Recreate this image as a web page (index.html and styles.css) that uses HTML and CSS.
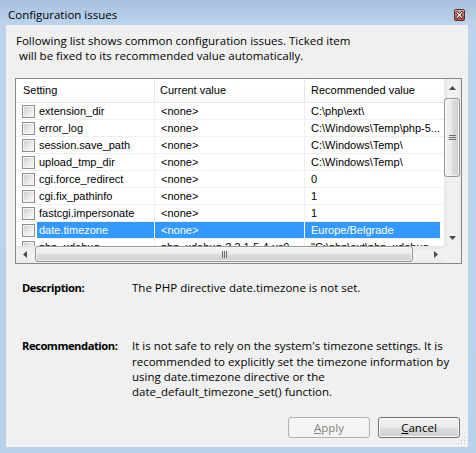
FILE: index.html
```html
<!DOCTYPE html>
<html>
<head>
<meta charset="utf-8">
<title>Configuration issues</title>
<link rel="stylesheet" href="styles.css">
</head>
<body>
<div class="window">
  <div class="titlebar">
    <span class="title">Configuration issues</span>
    <span class="close">
      <svg width="11" height="12" viewBox="0 0 11 12">
        <defs>
          <linearGradient id="cg" x1="0" y1="0" x2="0" y2="1">
            <stop offset="0" stop-color="#e9b2a8"/>
            <stop offset="0.5" stop-color="#d7766a"/>
            <stop offset="1" stop-color="#c24a3c"/>
          </linearGradient>
        </defs>
        <rect x="0.5" y="0.5" width="10" height="11" rx="1.5" fill="url(#cg)" stroke="#5e2a2a"/>
        <path d="M3.2 3.7 L7.8 8.3 M7.8 3.7 L3.2 8.3" stroke="#4a1d1d" stroke-width="2.8" stroke-linecap="square"/>
        <path d="M3.2 3.7 L7.8 8.3 M7.8 3.7 L3.2 8.3" stroke="#ffffff" stroke-width="1.2" stroke-linecap="square"/>
      </svg>
    </span>
  </div>
  <div class="client">
    <p class="intro">Following list shows common configuration issues. Ticked item<br>&nbsp;will be fixed to its recommended value automatically.</p>

    <div class="listview">
      <div class="lv-content">
        <div class="lv-header">
          <div class="hcell c1">Setting</div>
          <div class="hcell c2">Current value</div>
          <div class="hcell c3">Recommended value</div>
        </div>
        <div class="row">
          <div class="cell c1"><span class="check"></span><span class="name">extension_dir</span></div>
          <div class="cell c2">&lt;none&gt;</div>
          <div class="cell c3">C:\php\ext\</div>
        </div>
        <div class="row">
          <div class="cell c1"><span class="check"></span><span class="name">error_log</span></div>
          <div class="cell c2">&lt;none&gt;</div>
          <div class="cell c3">C:\Windows\Temp\php-5...</div>
        </div>
        <div class="row">
          <div class="cell c1"><span class="check"></span><span class="name">session.save_path</span></div>
          <div class="cell c2">&lt;none&gt;</div>
          <div class="cell c3">C:\Windows\Temp\</div>
        </div>
        <div class="row">
          <div class="cell c1"><span class="check"></span><span class="name">upload_tmp_dir</span></div>
          <div class="cell c2">&lt;none&gt;</div>
          <div class="cell c3">C:\Windows\Temp\</div>
        </div>
        <div class="row">
          <div class="cell c1"><span class="check"></span><span class="name">cgi.force_redirect</span></div>
          <div class="cell c2">&lt;none&gt;</div>
          <div class="cell c3">0</div>
        </div>
        <div class="row">
          <div class="cell c1"><span class="check"></span><span class="name">cgi.fix_pathinfo</span></div>
          <div class="cell c2">&lt;none&gt;</div>
          <div class="cell c3">1</div>
        </div>
        <div class="row">
          <div class="cell c1"><span class="check"></span><span class="name">fastcgi.impersonate</span></div>
          <div class="cell c2">&lt;none&gt;</div>
          <div class="cell c3">1</div>
        </div>
        <div class="row selected">
          <div class="cell c1"><span class="check"></span><span class="name">date.timezone</span></div>
          <div class="cell c2">&lt;none&gt;</div>
          <div class="cell c3">Europe/Belgrade</div>
        </div>
        <div class="row">
          <div class="cell c1"><span class="check"></span><span class="name">php_xdebug</span></div>
          <div class="cell c2">php_xdebug-2.2.1-5.4-vc9</div>
          <div class="cell c3">"C:\php\ext\php_xdebug-2.2.1-5.4-vc9.dll"</div>
        </div>
      </div>

      <div class="vscroll">
        <div class="sbtn">
          <svg width="7" height="4" viewBox="0 0 7 4"><polygon points="0,4 7,4 3.5,0" fill="#4a4a4a"/></svg>
        </div>
        <div class="vthumb">
          <svg width="7" height="5" viewBox="0 0 7 5"><path d="M0 0.5h7M0 2.5h7M0 4.5h7" stroke="#6b6b6b" stroke-width="1"/></svg>
        </div>
        <div class="sfill"></div>
        <div class="sbtn">
          <svg width="7" height="4" viewBox="0 0 7 4"><polygon points="0,0 7,0 3.5,4" fill="#4a4a4a"/></svg>
        </div>
      </div>

      <div class="hscroll">
        <div class="sbtn">
          <svg width="4" height="7" viewBox="0 0 4 7"><polygon points="4,0 4,7 0,3.5" fill="#4a4a4a"/></svg>
        </div>
        <div class="hthumb">
          <svg width="5" height="7" viewBox="0 0 5 7"><path d="M0.5 0v7M2.5 0v7M4.5 0v7" stroke="#6b6b6b" stroke-width="1"/></svg>
        </div>
        <div class="sfill"></div>
        <div class="sbtn">
          <svg width="4" height="7" viewBox="0 0 4 7"><polygon points="0,0 0,7 4,3.5" fill="#4a4a4a"/></svg>
        </div>
      </div>
      <div class="corner"></div>
    </div>

    <div class="details">
      <div class="label">Description:</div>
      <div class="value">The PHP directive date.timezone is not set.</div>
      <div class="label">Recommendation:</div>
      <div class="value">It is not safe to rely on the system's timezone settings. It is<br>recommended to explicitly set the timezone information by<br>using date.timezone directive or the<br>date_default_timezone_set() function.</div>
    </div>

    <div class="buttons">
      <button class="btn disabled"><u>A</u>pply</button>
      <button class="btn"><u>C</u>ancel</button>
    </div>

    <svg class="grip" width="8" height="8" viewBox="0 0 8 8">
      <g fill="#b8b8b8">
        <rect x="6" y="0" width="1" height="1"/>
        <rect x="3" y="3" width="1" height="1"/><rect x="6" y="3" width="1" height="1"/>
        <rect x="0" y="6" width="1" height="1"/><rect x="3" y="6" width="1" height="1"/><rect x="6" y="6" width="1" height="1"/>
      </g>
      <g fill="#ffffff">
        <rect x="7" y="1" width="1" height="1"/>
        <rect x="4" y="4" width="1" height="1"/><rect x="7" y="4" width="1" height="1"/>
        <rect x="1" y="7" width="1" height="1"/><rect x="4" y="7" width="1" height="1"/><rect x="7" y="7" width="1" height="1"/>
      </g>
    </svg>
  </div>
</div>
</body>
</html>
```

FILE: styles.css
```css
html, body {
  margin: 0;
  padding: 0;
}

body {
  width: 476px;
  height: 453px;
  overflow: hidden;
  font-family: "Open Sans", "Noto Sans", sans-serif;
  color: #000;
}

.window {
  width: 476px;
  height: 453px;
  box-sizing: border-box;
  padding: 0 8px 6px 6px;
  display: flex;
  flex-direction: column;
  background: linear-gradient(to bottom, #a7c1df 0px, #bcd3eb 25px, #b9d1ea 100%);
}

.titlebar {
  height: 25px;
  box-sizing: border-box;
  padding: 4px 3px 0 2px;
  display: flex;
  align-items: center;
  justify-content: space-between;
}

.title {
  font-size: 11.5px;
  line-height: 15px;
}

.close {
  display: block;
  width: 11px;
  height: 12px;
}

.close svg {
  display: block;
}

.client {
  flex: 1;
  position: relative;
  background: #f0f0f0;
  display: flex;
  flex-direction: column;
}

.intro {
  margin: 0;
  padding: 8px 0 0 10px;
  font-size: 11.5px;
  line-height: 15px;
  white-space: nowrap;
}

/* list view */
.listview {
  margin: 15px 0 0 9px;
  width: 447px;
  height: 186px;
  box-sizing: border-box;
  border: 1px solid #828790;
  background: #fff;
  display: grid;
  grid-template-columns: 428px 17px;
  grid-template-rows: 167px 17px;
  font-family: "Liberation Sans", Arial, sans-serif;
  font-size: 11px;
}

.lv-content {
  overflow: hidden;
}

.lv-header {
  display: flex;
  height: 24px;
  box-sizing: border-box;
  border-bottom: 1px solid #e5e5e5;
  background: linear-gradient(to bottom, #ffffff 0%, #ffffff 60%, #f7f8fa 100%);
}

.hcell {
  flex: none;
  box-sizing: border-box;
  line-height: 23px;
  border-right: 1px solid #e5e5e5;
  white-space: nowrap;
}

.hcell.c1 { width: 139px; padding-left: 7px; }
.hcell.c2 { width: 150px; padding-left: 5px; }
.hcell.c3 { width: 200px; padding-left: 6px; border-right: none; }

.row {
  display: flex;
  height: 17px;
  box-sizing: border-box;
  border-bottom: 1px solid #f0f0f0;
}

.cell {
  flex: none;
  box-sizing: border-box;
  height: 16px;
  line-height: 16px;
  white-space: nowrap;
  overflow: hidden;
  text-overflow: ellipsis;
  border-right: 1px solid #f0f0f0;
}

.cell.c1 {
  width: 139px;
  display: flex;
  align-items: center;
  padding-left: 6px;
}

.cell.c2 { width: 150px; padding-left: 6px; }
.cell.c3 { width: 135px; padding-left: 6px; border-right: none; }

.check {
  flex: none;
  position: relative;
  width: 13px;
  height: 13px;
  box-sizing: border-box;
  border: 1px solid #8e8f8f;
  background: #f4f4f4;
}

.check::after {
  content: "";
  position: absolute;
  left: 1px;
  top: 1px;
  width: 9px;
  height: 9px;
  background: linear-gradient(135deg, #cfcfcf 0%, #e9e9e9 55%, #f9f9f9 100%);
}

.name {
  flex: 1;
  height: 16px;
  margin-left: 2px;
  padding-left: 2px;
  overflow: hidden;
}

.row.selected .name,
.row.selected .c2,
.row.selected .c3 {
  background: #3399ff;
  color: #fff;
}

.row.selected .cell {
  border-right-color: #ffffff;
}

/* scrollbars */
.vscroll {
  display: flex;
  flex-direction: column;
  background: linear-gradient(to right, #e6e6e6 0%, #f1f1f1 30%, #f1f1f1 70%, #e9e9e9 100%);
}

.hscroll {
  display: flex;
  background: linear-gradient(to bottom, #e6e6e6 0%, #f1f1f1 30%, #f1f1f1 70%, #e9e9e9 100%);
}

.corner {
  background: #f0f0f0;
}

.sbtn {
  flex: none;
  width: 17px;
  height: 17px;
  display: flex;
  align-items: center;
  justify-content: center;
}

.sbtn svg, .vthumb svg, .hthumb svg {
  display: block;
}

.sfill {
  flex: 1;
}

.vthumb {
  flex: none;
  margin: 2px 1px 0 0;
  height: 79px;
  box-sizing: border-box;
  border: 1px solid #979797;
  border-radius: 3px;
  background: linear-gradient(to right, #f3f3f3 0%, #ececec 45%, #dcdcdc 55%, #cfcfcf 100%);
  box-shadow: inset 0 0 0 1px rgba(255, 255, 255, 0.6);
  display: flex;
  align-items: center;
  justify-content: center;
}

.hthumb {
  flex: none;
  margin: 0 0 1px 2px;
  width: 378px;
  box-sizing: border-box;
  border: 1px solid #979797;
  border-radius: 3px;
  background: linear-gradient(to bottom, #f3f3f3 0%, #ececec 45%, #dcdcdc 55%, #cfcfcf 100%);
  box-shadow: inset 0 0 0 1px rgba(255, 255, 255, 0.6);
  display: flex;
  align-items: center;
  justify-content: center;
}

/* details */
.details {
  margin: 16px 0 0 16px;
  display: grid;
  grid-template-columns: 110px auto;
  row-gap: 43px;
  font-size: 11.5px;
  line-height: 15.3px;
}

.label {
  font-weight: bold;
  font-size: 11.2px;
  letter-spacing: -0.45px;
  white-space: nowrap;
}

.value {
  white-space: nowrap;
}

/* buttons */
.buttons {
  margin-top: auto;
  margin-bottom: 9px;
  padding-right: 8px;
  display: flex;
  justify-content: flex-end;
  gap: 8px;
}

.btn {
  width: 82px;
  height: 21px;
  box-sizing: border-box;
  padding: 0;
  border: 1px solid #707070;
  border-radius: 3px;
  font-family: "Open Sans", "Noto Sans", sans-serif;
  font-size: 11.5px;
  line-height: 17px;
  color: #000;
  background: linear-gradient(to bottom, #f2f2f2 0%, #ebebeb 48%, #dddddd 52%, #cfcfcf 100%);
  box-shadow: inset 0 0 0 1px #fcfcfc;
}

.btn.disabled {
  border-color: #adb2b5;
  background: #f4f4f4;
  color: #838383;
  box-shadow: none;
}

.grip {
  position: absolute;
  right: 2px;
  bottom: 2px;
}
```
